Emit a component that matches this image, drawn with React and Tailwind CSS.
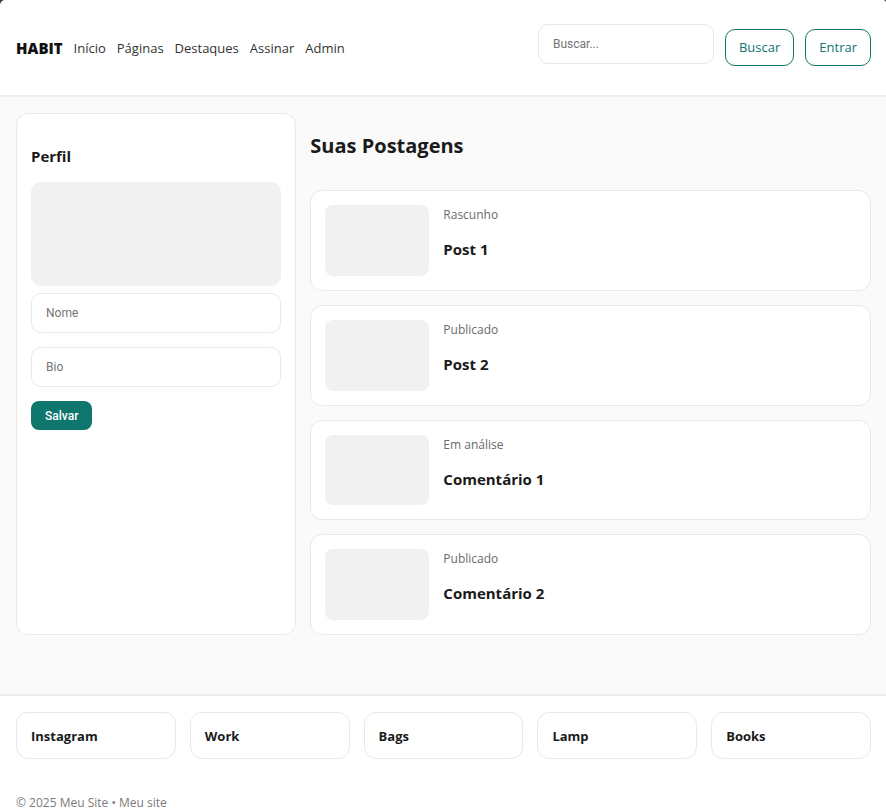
const links = ["Início", "Páginas", "Destaques", "Assinar", "Admin"];

const posts = [
  { status: "Rascunho", title: "Post 1" },
  { status: "Publicado", title: "Post 2" },
  { status: "Em análise", title: "Comentário 1" },
  { status: "Publicado", title: "Comentário 2" },
];

const footerLinks = ["Instagram", "Work", "Bags", "Lamp", "Books"];

const fieldClass =
  "block h-10 w-full rounded-[10px] border border-[#e9e9e9] bg-white px-[14px] font-[Roboto,sans-serif] text-[12px] text-[#1a1a1a] placeholder:text-[#757575]";

function OutlineButton({ children }) {
  return (
    <button
      type="button"
      className="h-[37px] rounded-[10px] border border-[#0f766e] px-[13px] text-[13px] text-[#0f766e]"
    >
      {children}
    </button>
  );
}

function Header() {
  return (
    <header className="flex items-center justify-between border-b-2 border-[#eeeeee] bg-white py-6 pr-[15px] pl-4">
      <nav className="flex items-center gap-[11px] text-[13px] leading-5 text-[#333333]">
        <a href="#" className="text-[15px] font-extrabold text-[#111111]">HABIT</a>
        {links.map((label) => (
          <a key={label} href="#">{label}</a>
        ))}
      </nav>
      <form className="flex items-center gap-[11px]">
        <div className="mb-[7px] w-44">
          <input type="text" aria-label="Buscar" placeholder="Buscar..." className={fieldClass} />
        </div>
        <OutlineButton>Buscar</OutlineButton>
        <OutlineButton>Entrar</OutlineButton>
      </form>
    </header>
  );
}

function Profile() {
  return (
    <aside className="rounded-xl border border-[#e9e9e9] bg-white px-[14px] pt-8">
      <h3 className="text-[15px] font-bold leading-5">Perfil</h3>
      <div className="mt-4 h-[104px] rounded-[10px] bg-[#f1f1f1]" />
      <form className="mt-[7px] flex flex-col items-start gap-[14px]">
        <input type="text" aria-label="Nome" placeholder="Nome" className={fieldClass} />
        <input type="text" aria-label="Bio" placeholder="Bio" className={fieldClass} />
        <button
          type="button"
          className="h-[29px] rounded-lg bg-[#0f766e] px-[14px] font-[Roboto,sans-serif] text-[12px] font-medium text-white"
        >
          Salvar
        </button>
      </form>
    </aside>
  );
}

function Post({ status, title }) {
  return (
    <article className="flex gap-[14px] rounded-xl border border-[#e9e9e9] bg-white p-[14px]">
      <div className="w-[104px] shrink-0 rounded-lg bg-[#f1f1f1]" />
      <div>
        <p className="text-[12px] leading-5 text-[#6b6b6b]">{status}</p>
        <h3 className="mt-3 text-[15px] font-bold leading-6">{title}</h3>
      </div>
    </article>
  );
}

export default function App() {
  return (
    <div className="h-screen bg-[#333333]">
      <div className="h-full overflow-y-auto rounded-tl-[5px] rounded-tr-[3px] bg-[#fafafa] font-['Segoe_UI','Open_Sans',sans-serif] text-[#1a1a1a] [scrollbar-width:none]">
        <Header />
        <main className="grid min-h-[597px] grid-cols-[1fr_2fr] gap-[14px] pt-4 pr-[15px] pb-[59px] pl-4">
          <Profile />
          <section className="flex flex-col">
            <h2 className="pt-[19px] pb-[30px] text-[20px] font-bold leading-7">Suas Postagens</h2>
            <div className="grid flex-1 auto-rows-fr gap-[14px]">
              {posts.map((post) => (
                <Post key={post.title} {...post} />
              ))}
            </div>
          </section>
        </main>
        <footer className="border-t-2 border-[#eeeeee] bg-white pt-4 pr-[15px] pl-4">
          <div className="grid grid-cols-5 gap-[14px]">
            {footerLinks.map((label) => (
              <a
                key={label}
                href="#"
                className="rounded-xl border border-[#e9e9e9] px-[14px] pt-[13px] pb-3 text-[13px] font-bold leading-5"
              >
                {label}
              </a>
            ))}
          </div>
          <p className="pt-[38px] text-[12px] leading-3 text-[#7a7a7a]">© 2025 Meu Site • Meu site</p>
        </footer>
      </div>
    </div>
  );
}
